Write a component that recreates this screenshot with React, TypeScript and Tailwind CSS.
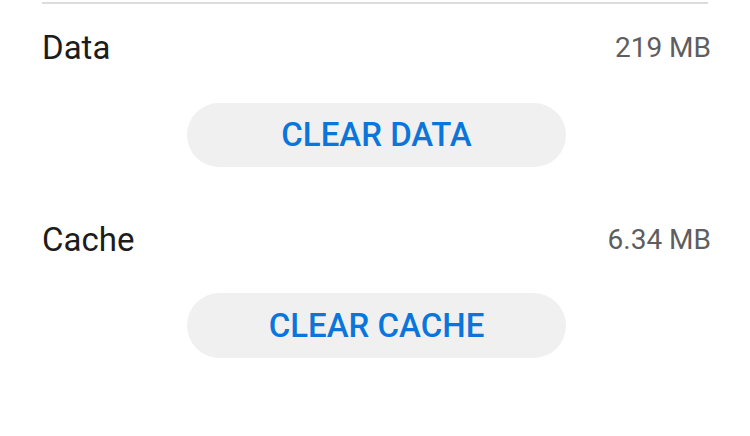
export default function App() {
  const font = { fontFamily: 'Roboto, "Noto Sans", sans-serif' };
  return (
    <div className="h-[436px] w-[750px] bg-white" style={font}>
      <div className="mx-[42px] h-[4px] border-b-2 border-[#dcdcdc]" />
      <div className="pl-[42px] pr-[39px]">
        <div className="flex h-[88px] items-center justify-between">
          <span className="text-[33px] text-[#1c1c1c]">Data</span>
          <span className="text-[28px] text-[#5e5e5e]">219 MB</span>
        </div>
        <div className="mt-[11px] flex justify-center">
          <button className="h-[64px] w-[379px] rounded-full bg-[#f0f0f0] text-[33px] font-medium text-[#0a76dc]">
            CLEAR DATA
          </button>
        </div>
        <div className="mt-[29px] flex h-[88px] items-center justify-between">
          <span className="text-[33px] text-[#1c1c1c]">Cache</span>
          <span className="text-[28px] text-[#5e5e5e]">6.34 MB</span>
        </div>
        <div className="mt-[9px] flex justify-center">
          <button className="h-[65px] w-[379px] rounded-full bg-[#f0f0f0] text-[33px] font-medium text-[#0a76dc]">
            CLEAR CACHE
          </button>
        </div>
      </div>
    </div>
  );
}
